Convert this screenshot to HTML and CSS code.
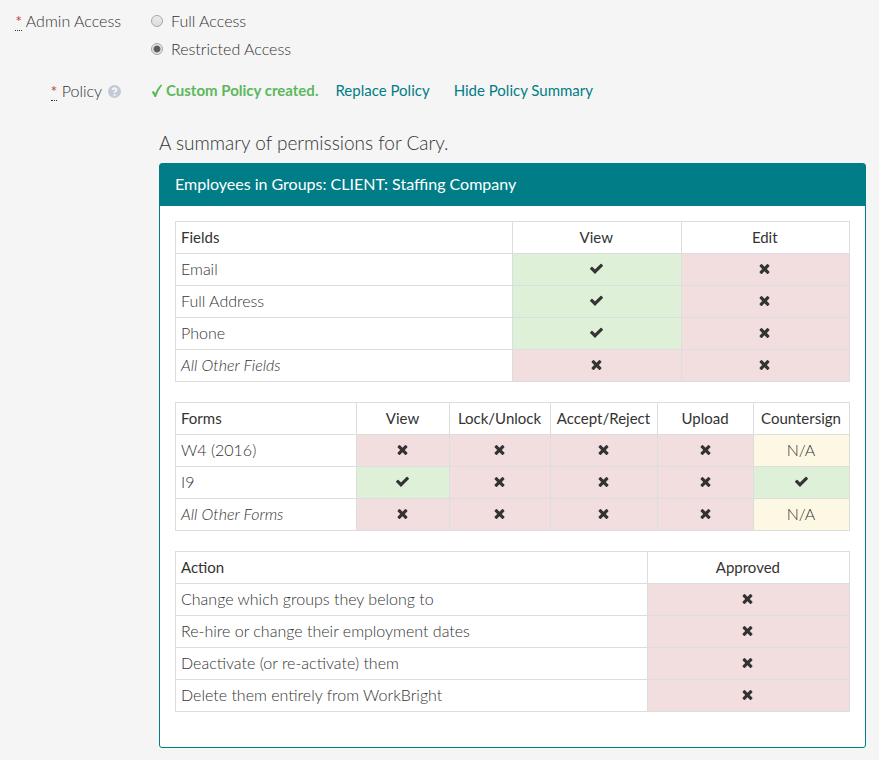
FILE: index.html
```html
<!DOCTYPE html>
<html lang="en">
<head>
<meta charset="utf-8">
<meta name="viewport" content="width=device-width, initial-scale=1">
<title>Admin Access</title>
<link rel="stylesheet" href="styles.css">
</head>
<body>
<svg class="sprite" aria-hidden="true">
  <symbol id="yes" viewBox="0 0 1792 1792"><path d="M1671 566q0 40-28 68l-724 724-136 136q-28 28-68 28t-68-28l-136-136-362-362q-28-28-28-68t28-68l136-136q28-28 68-28t68 28l294 295 656-657q28-28 68-28t68 28l136 136q28 28 28 68z"/></symbol>
  <symbol id="no" viewBox="0 0 1792 1792"><path d="M1490 1322q0 40-28 68l-136 136q-28 28-68 28t-68-28l-294-294-294 294q-28 28-68 28t-68-28l-136-136q-28-28-28-68t28-68l294-294-294-294q-28-28-28-68t28-68l136-136q28-28 68-28t68 28l294 294 294-294q28-28 68-28t68 28l136 136q28 28 28 68t-28 68l-294 294 294 294q28 28 28 68z"/></symbol>
</svg>
<form class="form">
  <div class="row" role="radiogroup" aria-labelledby="access-label">
    <div class="label" id="access-label"><abbr title="required">*</abbr> Admin Access</div>
    <div class="options">
      <label class="option"><input type="radio" name="access" value="full">Full Access</label>
      <label class="option"><input type="radio" name="access" value="restricted" checked>Restricted Access</label>
    </div>
  </div>
  <div class="row">
    <div class="label"><abbr title="required">*</abbr> Policy
      <svg class="help" viewBox="0 0 13 13" aria-hidden="true"><circle cx="6.500" cy="6.500" r="6.500"/><path d="M4.600 4.900C4.700 2.500 8.500 2.600 8.500 4.800C8.500 6.200 6.600 6.200 6.600 7.800M6.600 9v1.800"/></svg>
    </div>
    <div class="policy">
      <strong class="created"><svg class="tick" viewBox="0 0 12 14" aria-hidden="true"><path d="M.6 8L2.900 7L4.200 9.600Q6.200 4.200 9.600.8L11.400.8Q7.200 6.300 5 13H3.600Q2.500 10.200.6 8Z"/></svg>Custom Policy created.</strong>
      <a href="#replace">Replace Policy</a>
      <a href="#summary">Hide Policy Summary</a>
    </div>
  </div>
</form>
<main class="summary" id="summary">
  <p class="lead">A summary of permissions for Cary.</p>
  <section class="panel">
    <h2>Employees in Groups: CLIENT: Staffing Company</h2>
    <div class="panel-body">
      <table class="fields">
        <colgroup><col><col class="quarter"><col class="quarter"></colgroup>
        <thead><tr><th>Fields</th><th>View</th><th>Edit</th></tr></thead>
        <tbody>
          <tr><td>Email</td><td class="yes"><svg role="img" aria-label="Yes"><use href="#yes"/></svg></td><td class="no"><svg role="img" aria-label="No"><use href="#no"/></svg></td></tr>
          <tr><td>Full Address</td><td class="yes"><svg role="img" aria-label="Yes"><use href="#yes"/></svg></td><td class="no"><svg role="img" aria-label="No"><use href="#no"/></svg></td></tr>
          <tr><td>Phone</td><td class="yes"><svg role="img" aria-label="Yes"><use href="#yes"/></svg></td><td class="no"><svg role="img" aria-label="No"><use href="#no"/></svg></td></tr>
          <tr><td><em>All Other Fields</em></td><td class="no"><svg role="img" aria-label="No"><use href="#no"/></svg></td><td class="no"><svg role="img" aria-label="No"><use href="#no"/></svg></td></tr>
        </tbody>
      </table>
      <table class="forms">
        <colgroup><col><col class="view"><col class="lock"><col class="accept"><col class="wide"><col class="wide"></colgroup>
        <thead><tr><th>Forms</th><th>View</th><th>Lock/Unlock</th><th>Accept/Reject</th><th>Upload</th><th>Countersign</th></tr></thead>
        <tbody>
          <tr><td>W4 (2016)</td><td class="no"><svg role="img" aria-label="No"><use href="#no"/></svg></td><td class="no"><svg role="img" aria-label="No"><use href="#no"/></svg></td><td class="no"><svg role="img" aria-label="No"><use href="#no"/></svg></td><td class="no"><svg role="img" aria-label="No"><use href="#no"/></svg></td><td class="na">N/A</td></tr>
          <tr><td>I9</td><td class="yes"><svg role="img" aria-label="Yes"><use href="#yes"/></svg></td><td class="no"><svg role="img" aria-label="No"><use href="#no"/></svg></td><td class="no"><svg role="img" aria-label="No"><use href="#no"/></svg></td><td class="no"><svg role="img" aria-label="No"><use href="#no"/></svg></td><td class="yes"><svg role="img" aria-label="Yes"><use href="#yes"/></svg></td></tr>
          <tr><td><em>All Other Forms</em></td><td class="no"><svg role="img" aria-label="No"><use href="#no"/></svg></td><td class="no"><svg role="img" aria-label="No"><use href="#no"/></svg></td><td class="no"><svg role="img" aria-label="No"><use href="#no"/></svg></td><td class="no"><svg role="img" aria-label="No"><use href="#no"/></svg></td><td class="na">N/A</td></tr>
        </tbody>
      </table>
      <table class="actions">
        <colgroup><col><col class="approved"></colgroup>
        <thead><tr><th>Action</th><th>Approved</th></tr></thead>
        <tbody>
          <tr><td>Change which groups they belong to</td><td class="no"><svg role="img" aria-label="No"><use href="#no"/></svg></td></tr>
          <tr><td>Re-hire or change their employment dates</td><td class="no"><svg role="img" aria-label="No"><use href="#no"/></svg></td></tr>
          <tr><td>Deactivate (or re-activate) them</td><td class="no"><svg role="img" aria-label="No"><use href="#no"/></svg></td></tr>
          <tr><td>Delete them entirely from WorkBright</td><td class="no"><svg role="img" aria-label="No"><use href="#no"/></svg></td></tr>
        </tbody>
      </table>
    </div>
  </section>
</main>
</body>
</html>
```
FILE: styles.css
```css
* { box-sizing: border-box; }

body {
  margin: 0;
  padding: 10px 13px 12px 0;
  background: #f5f5f5;
  color: #333;
  font: 300 16px/21px Lato, "Open Sans", sans-serif;
}

.sprite { display: none; }

.row {
  display: grid;
  grid-template-columns: 121px 1fr;
  column-gap: 30px;
  margin-bottom: 21px;
}

.label { text-align: right; }

abbr {
  color: #b94a48;
  font-weight: 400;
  text-decoration: none;
  border-bottom: 1px dotted #333;
}

.help {
  width: 13px;
  height: 13px;
  margin-left: 2px;
  vertical-align: -1px;
}
.help circle { fill: #c3c9d5; }
.help path { fill: none; stroke: #f5f5f5; stroke-width: 2; }

.options { display: grid; row-gap: 7px; }

.option { display: flex; align-items: center; gap: 8px; }

.option input {
  appearance: none;
  width: 12px;
  height: 12px;
  margin: 0;
  border: 1px solid #a6a6a6;
  border-radius: 50%;
  background: linear-gradient(#ececec, #dcdcdc);
}
.option input:checked {
  background: radial-gradient(circle, #5a5a5a 0 2px, #666 3px, #e6e6e6 4px);
}

.policy { display: flex; align-items: center; }

.created {
  margin-right: 17px;
  color: #5cb85c;
  font-size: 15px;
  font-weight: 700;
}

.tick { width: 12px; height: 14px; margin-right: 3px; fill: #5cb85c; vertical-align: -2px; }

.policy a {
  margin-right: 24px;
  color: #007d87;
  font-size: 15px;
  font-weight: 400;
  text-decoration: none;
}

.summary { margin-left: 159px; }

.lead { margin: 0 0 10px; padding-top: 10px; font-size: 19px; line-height: 21px; }

.panel {
  background: #fff;
  border: 1px solid #007d87;
  border-radius: 3px;
}

.panel h2 {
  margin: 0;
  padding: 9px 15px 11px;
  background: #007d87;
  color: #fff;
  font-size: 16px;
  font-weight: 400;
  line-height: 22px;
}

.panel-body { padding: 15px; }

table {
  width: 100%;
  margin-bottom: 20px;
  border-collapse: collapse;
  table-layout: fixed;
}

th, td {
  height: 32px;
  padding: 4px 6px 6px 5px;
  border: 1px solid #ddd;
  font-weight: 300;
  line-height: 21px;
  text-align: center;
  white-space: nowrap;
}
th { padding: 5px 6px 5px 5px; font-size: 15px; font-weight: 400; }
th:first-child, td:first-child { text-align: left; }

td svg { display: block; width: 15px; height: 15px; margin: 0 auto; fill: #333; }

.quarter { width: 25%; }
.view { width: 93px; }
.lock { width: 101px; }
.accept { width: 107px; }
.wide { width: 96px; }
.approved { width: 30%; }

.yes { background: #dff0d8; }
.no { background: #f2dede; }
.na { background: #fcf8e3; }
```
